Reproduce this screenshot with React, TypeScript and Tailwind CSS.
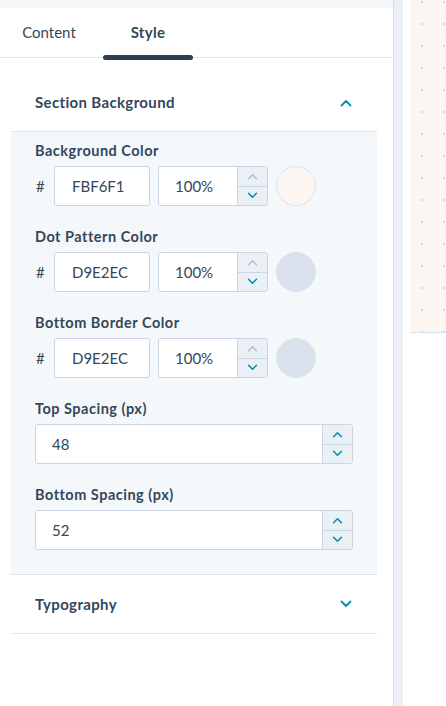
function Chevron({ dir, className }: { dir: "up" | "down"; className?: string }) {
  return (
    <svg viewBox="0 0 12 8" className={className} fill="none" stroke="currentColor" strokeWidth="1.8" strokeLinecap="round" strokeLinejoin="round">
      {dir === "up" ? <path d="M1.5 6.5 6 2l4.5 4.5" /> : <path d="M1.5 1.5 6 6l4.5-4.5" />}
    </svg>
  );
}

function Stepper({ upDisabled }: { upDisabled?: boolean }) {
  return (
    <div className="flex w-[30px] flex-col border-l border-[#cbd6e2] bg-[#eaf0f6]">
      <div className="flex flex-1 items-center justify-center border-b border-[#cbd6e2]">
        <Chevron dir="up" className={`h-[7px] w-[11px] ${upDisabled ? "text-[#b0c1d4]" : "text-[#0091ae]"}`} />
      </div>
      <div className="flex flex-1 items-center justify-center">
        <Chevron dir="down" className="h-[7px] w-[11px] text-[#0091ae]" />
      </div>
    </div>
  );
}

function FieldLabel({ children }: { children: string }) {
  return <div className="mb-[5px] h-5 text-[14.5px] leading-5 font-bold tracking-[0.5px]">{children}</div>;
}

function ColorField({ label, hex, swatch }: { label: string; hex: string; swatch: string }) {
  return (
    <div>
      <FieldLabel>{label}</FieldLabel>
      <div className="flex h-10 items-center">
        <span className="w-[19px] pl-px text-[15px]">#</span>
        <div className="flex h-10 w-[96px] items-center rounded-[3px] border border-[#cbd6e2] bg-white pl-[17px] text-[15px]">
          {hex}
        </div>
        <div className="ml-2 flex h-10 w-[110px] overflow-hidden rounded-[3px] border border-[#cbd6e2] bg-white">
          <div className="flex flex-1 items-center pl-4 text-[15px]">100%</div>
          <Stepper upDisabled />
        </div>
        <div className={`ml-2 h-10 w-10 rounded-full border border-[#dfe3eb] ${swatch}`} />
      </div>
    </div>
  );
}

function NumberField({ label, value }: { label: string; value: string }) {
  return (
    <div>
      <FieldLabel>{label}</FieldLabel>
      <div className="flex h-10 w-[318px] overflow-hidden rounded-[3px] border border-[#cbd6e2] bg-white">
        <div className="flex flex-1 items-center pl-4 text-[15px]">{value}</div>
        <Stepper />
      </div>
    </div>
  );
}

export default function App() {
  return (
    <div className="flex h-[706px] w-[446px] overflow-hidden bg-white font-['Lato',sans-serif] text-[#33475b]">
      {/* Editor panel */}
      <aside className="flex w-[393px] flex-col">
        <div className="h-2 bg-[#f5f8fa]" />
        <div className="flex h-[50px] gap-[9px] border-b border-[#dfe3eb] pl-1 text-[15px]">
          <div className="flex w-[90px] items-center justify-center">Content</div>
          <div className="relative flex w-[90px] items-center justify-center font-bold tracking-[0.3px]">
            Style
            <div className="absolute -bottom-[3px] left-0 h-[5px] w-full rounded-full bg-[#2d3e50]" />
          </div>
        </div>

        <div className="mr-4 ml-[11px] flex flex-col">
          {/* Section Background */}
          <div className="flex h-[73px] items-center justify-between pt-4 pr-[25px] pl-6">
            <span className="text-[15px] font-bold tracking-[0.35px]">Section Background</span>
            <Chevron dir="up" className="h-2 w-3 text-[#0091ae]" />
          </div>
          <div className="flex flex-col gap-[21px] border-y border-[#dfe3eb] bg-[#f5f8fa] px-6 pt-[9px] pb-6">
            <ColorField label="Background Color" hex="FBF6F1" swatch="bg-[#fbf6f1]" />
            <ColorField label="Dot Pattern Color" hex="D9E2EC" swatch="bg-[#d9e2ec]" />
            <ColorField label="Bottom Border Color" hex="D9E2EC" swatch="bg-[#d9e2ec]" />
            <NumberField label="Top Spacing (px)" value="48" />
            <NumberField label="Bottom Spacing (px)" value="52" />
          </div>

          {/* Typography */}
          <div className="flex h-[59px] items-center justify-between border-b border-[#dfe3eb] pr-[25px] pl-6">
            <span className="text-[15px] font-bold tracking-[0.35px]">Typography</span>
            <Chevron dir="down" className="h-2 w-3 text-[#0091ae]" />
          </div>
        </div>
      </aside>

      {/* Divider */}
      <div className="w-px bg-[#d6dfe8]" />
      <div className="w-[9px] bg-[#eaf0f6]" />

      {/* Preview */}
      <div className="flex-1 pl-[7px]">
        <div className="h-[333px] border-b border-[#d9e2ec] bg-[#fbf6f1] bg-[radial-gradient(circle,#ddd5cc_1px,transparent_1.6px)] bg-[length:22px_22px] bg-[position:1px_-9px]" />
      </div>
    </div>
  );
}
